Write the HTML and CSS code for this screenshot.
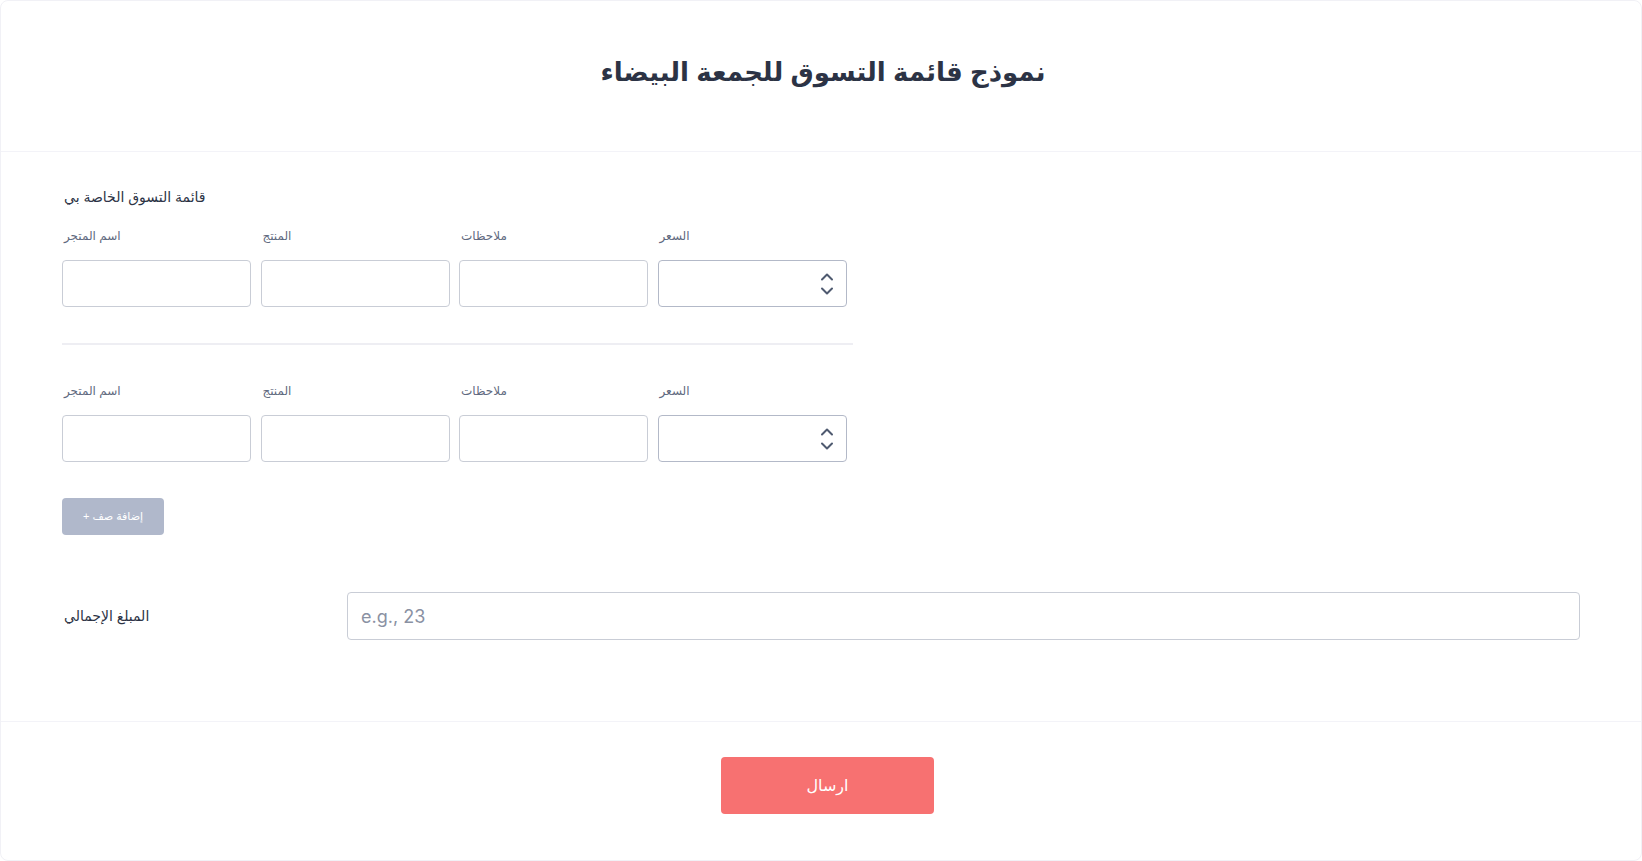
FILE: index.html
```html
<!DOCTYPE html>
<html lang="ar">
<head>
    <meta charset="utf-8">
    <meta name="viewport" content="width=device-width, initial-scale=1.0">
    <link rel="stylesheet" href="styles.css">
</head>
<body>
    <div class="form-card">
        <div class="form-header">
            <h1 class="form-title">نموذج قائمة التسوق للجمعة البيضاء</h1>
        </div>

        <div class="form-body">
            <div class="section-label">قائمة التسوق الخاصة بي</div>

            <div class="list-row">
                <div class="field">
                    <label class="field-label">اسم المتجر</label>
                    <input class="text-input" type="text">
                </div>
                <div class="field">
                    <label class="field-label">المنتج</label>
                    <input class="text-input" type="text">
                </div>
                <div class="field">
                    <label class="field-label">ملاحظات</label>
                    <input class="text-input" type="text">
                </div>
                <div class="field">
                    <label class="field-label">السعر</label>
                    <div class="number-wrap">
                        <input class="text-input price-input" type="text">
                        <svg class="spinner" width="14" height="26" viewBox="0 0 14 26">
                            <path d="M2 8.5 L7 3.5 L12 8.5" />
                            <path d="M2 17.5 L7 22.5 L12 17.5" />
                        </svg>
                    </div>
                </div>
            </div>

            <div class="row-divider"></div>

            <div class="list-row second">
                <div class="field">
                    <label class="field-label">اسم المتجر</label>
                    <input class="text-input" type="text">
                </div>
                <div class="field">
                    <label class="field-label">المنتج</label>
                    <input class="text-input" type="text">
                </div>
                <div class="field">
                    <label class="field-label">ملاحظات</label>
                    <input class="text-input" type="text">
                </div>
                <div class="field">
                    <label class="field-label">السعر</label>
                    <div class="number-wrap">
                        <input class="text-input price-input" type="text">
                        <svg class="spinner" width="14" height="26" viewBox="0 0 14 26">
                            <path d="M2 8.5 L7 3.5 L12 8.5" />
                            <path d="M2 17.5 L7 22.5 L12 17.5" />
                        </svg>
                    </div>
                </div>
            </div>

            <button class="add-row" dir="rtl">إضافة صف +</button>

            <div class="total-row">
                <label class="total-label">المبلغ الإجمالي</label>
                <input class="total-input" type="text" placeholder="e.g., 23">
            </div>
        </div>

        <div class="form-footer">
            <button class="submit-btn">ارسال</button>
        </div>
    </div>
</body>
</html>
```

FILE: styles.css
```css
* {
    margin: 0;
    padding: 0;
    box-sizing: border-box;
    font-family: 'Liberation Sans', 'DejaVu Sans', sans-serif;
}

body {
    background: #fff;
    width: 1642px;
    height: 861px;
    overflow: hidden;
}

.form-card {
    height: 861px;
    border: 1px solid #f1f1f6;
    border-radius: 8px;
    background: #fff;
    display: flex;
    flex-direction: column;
}

.form-header {
    height: 151px;
    border-bottom: 1px solid #f3f3f8;
    display: flex;
    align-items: center;
    justify-content: center;
    padding-bottom: 7px;
    padding-left: 4px;
}

.form-title {
    font-size: 26px;
    font-weight: bold;
    color: #2c3345;
}

.form-body {
    padding: 35px 61px 0 61px;
    height: 570px;
    border-bottom: 1px solid #f3f3f8;
}

.section-label {
    font-size: 14px;
    line-height: 20px;
    color: #2c3345;
    padding-left: 2px;
}

.list-row {
    display: grid;
    grid-template-columns: repeat(4, 189px);
    column-gap: 9.5px;
    margin-top: 21px;
}

.list-row.second {
    margin-top: 38px;
}

.field {
    display: flex;
    flex-direction: column;
}

.field-label {
    font-size: 12px;
    line-height: 16px;
    color: #5f6a80;
    padding-left: 2px;
    margin-bottom: 16px;
}

.text-input {
    width: 100%;
    height: 47px;
    border: 1px solid #c9cdd6;
    border-radius: 4px;
    background: #fff;
    outline: none;
}

.price-input {
    border-color: #b3b9c8;
}

.number-wrap {
    position: relative;
}

.spinner {
    position: absolute;
    right: 13px;
    top: 11px;
    fill: none;
    stroke: #4f5a70;
    stroke-width: 2;
    stroke-linecap: round;
    stroke-linejoin: round;
}

.row-divider {
    width: 791px;
    height: 2px;
    background: #eeeef3;
    margin-top: 36px;
}

.add-row {
    display: block;
    margin-top: 36px;
    width: 102px;
    height: 37px;
    border: none;
    border-radius: 4px;
    background: #b0b8cb;
    color: #fff;
    font-size: 11px;
    cursor: pointer;
}

.total-row {
    display: flex;
    align-items: center;
    margin-top: 57px;
}

.total-label {
    width: 285px;
    flex-shrink: 0;
    font-size: 14px;
    color: #2c3345;
    padding-left: 2px;
}

.total-input {
    flex: 1;
    height: 48px;
    border: 1px solid #c9cdd6;
    border-radius: 4px;
    padding: 0 13px;
    font-family: Inter, 'Liberation Sans', sans-serif;
    font-size: 18px;
    color: #2c3345;
    outline: none;
}

.total-input::placeholder {
    color: #8a91a3;
}

.form-footer {
    flex: 1;
    display: flex;
    justify-content: center;
    padding-top: 35px;
    padding-left: 13px;
}

.submit-btn {
    width: 213px;
    height: 57px;
    border: none;
    border-radius: 4px;
    background: #f77171;
    color: #fff;
    font-size: 16px;
    cursor: pointer;
}
```
